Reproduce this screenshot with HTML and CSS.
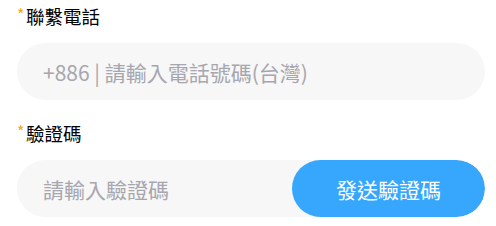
FILE: index.html
```html
<!DOCTYPE html>
<html lang="zh-Hant">
<head>
<meta charset="utf-8">
<link rel="stylesheet" href="styles.css">
</head>
<body>
<form class="form">
  <div class="group">
    <label class="label"><span class="req">*</span>聯繫電話</label>
    <div class="field">
      <input class="input" type="tel" placeholder="+886 | 請輸入電話號碼(台灣)">
    </div>
  </div>
  <div class="group">
    <label class="label"><span class="req">*</span>驗證碼</label>
    <div class="field">
      <input class="input" type="text" placeholder="請輸入驗證碼">
      <button class="send" type="button">發送驗證碼</button>
    </div>
  </div>
</form>
</body>
</html>
```
FILE: styles.css
```css
html, body {
  margin: 0;
  background: #ffffff;
}
body {
  font-family: "Noto Sans CJK TC", "Noto Sans", sans-serif;
}
.form {
  display: flex;
  flex-direction: column;
  gap: 21px;
  padding: 4px 11px 0 17px;
}
.group {
  display: flex;
  flex-direction: column;
}
.label {
  display: flex;
  align-items: flex-start;
  font-size: 18.5px;
  line-height: 24px;
  height: 24px;
  color: #000;
  margin-bottom: 15px;
}
.req {
  color: #f5a623;
  font-size: 16px;
  line-height: 20px;
  width: 9px;
}
.field {
  display: flex;
  align-items: stretch;
  height: 57px;
  background: #f7f7f7;
  border-radius: 29px;
  overflow: hidden;
}
.input {
  flex: 1;
  min-width: 0;
  border: none;
  outline: none;
  background: transparent;
  padding: 0 0 0 26px;
  font-family: "Noto Sans CJK TC", "Noto Sans", sans-serif;
  font-size: 21px;
  color: #333;
}
.input::placeholder {
  color: #a6a6ae;
}
.send {
  width: 193px;
  border: none;
  border-radius: 29px;
  background: #36a7fd;
  color: #ffffff;
  font-family: "Noto Sans CJK TC", "Noto Sans", sans-serif;
  font-size: 21px;
  padding: 0;
  cursor: pointer;
}
```
